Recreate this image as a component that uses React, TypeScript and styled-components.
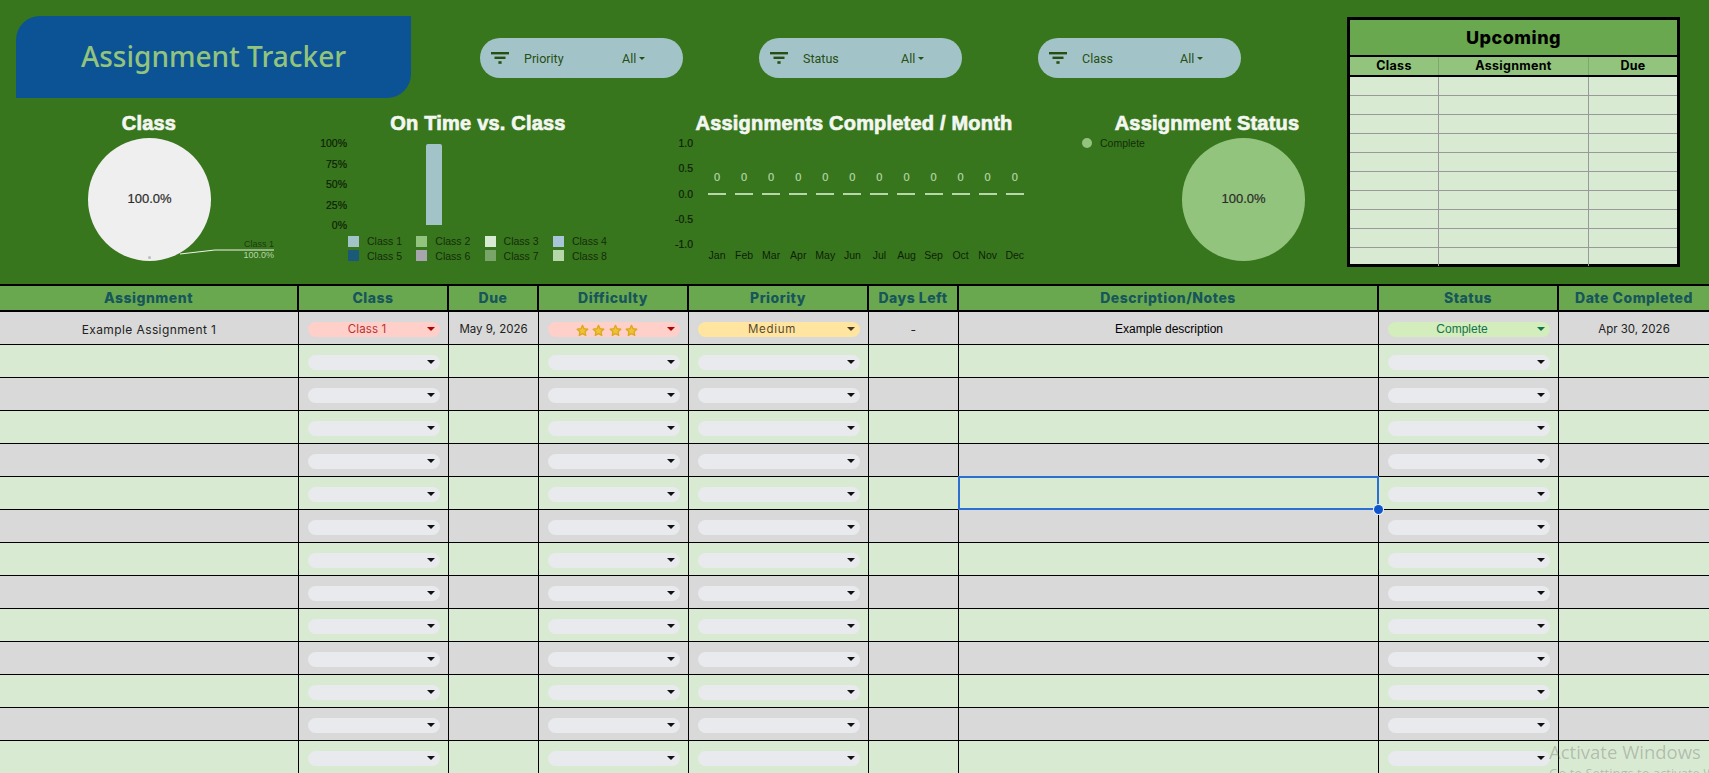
import React from 'react';
import styled, { createGlobalStyle } from 'styled-components';

const GREEN = '#38761d';
const MONT = `Inter, 'Liberation Sans', sans-serif`;
const ARIAL = `'Liberation Sans', Arial, sans-serif`;

const GlobalStyle = createGlobalStyle`
  html, body {
    margin: 0;
    height: 100%;
    overflow: hidden;
    background: ${GREEN};
  }
  * { box-sizing: border-box; }
`;

const MONTHS = ['Jan', 'Feb', 'Mar', 'Apr', 'May', 'Jun', 'Jul', 'Aug', 'Sep', 'Oct', 'Nov', 'Dec'];
const LEGEND = [
  ['Class 1', '#a2c4c9'],
  ['Class 2', '#93c47d'],
  ['Class 3', '#d9ead3'],
  ['Class 4', '#a8c5da'],
  ['Class 5', '#1a5a78'],
  ['Class 6', '#a6a6ac'],
  ['Class 7', '#7aa56a'],
  ['Class 8', '#b6d7a8'],
];
const COLUMNS = ['Assignment', 'Class', 'Due', 'Difficulty', 'Priority', 'Days Left', 'Description/Notes', 'Status', 'Date Completed'];
const ROW_COUNT = 14;

const FilterIcon = () => (
  <svg width="18" height="12" viewBox="0 0 18 12">
    <rect x="0" y="0" width="18" height="2.4" fill="#274e13" />
    <rect x="3.5" y="4.6" width="11" height="2.4" fill="#274e13" />
    <rect x="7.4" y="9.2" width="3.2" height="2.6" fill="#274e13" />
  </svg>
);

const StarIcon = () => (
  <svg width="13" height="13" viewBox="0 0 24 24">
    <path
      d="M12 2.5l2.9 6.3 6.9.8-5.1 4.7 1.4 6.8-6.1-3.4-6.1 3.4 1.4-6.8-5.1-4.7 6.9-.8z"
      fill="#f1c232"
      stroke="#dba81f"
      strokeWidth="2.4"
      strokeLinejoin="round"
    />
  </svg>
);

const Filter = ({ label }: { label: string }) => (
  <FilterPill>
    <FilterIcon />
    <FilterLabel>{label}</FilterLabel>
    <FilterValue>All</FilterValue>
    <Arrow $color="#274e13" $size={3.5} />
  </FilterPill>
);

const Chip = ({ bg, fg, arrow, children }: { bg?: string; fg?: string; arrow?: string; children?: React.ReactNode }) => (
  <ChipBody $bg={bg}>
    <ChipText $fg={fg}>{children}</ChipText>
    <ChipArrow $color={arrow || '#111'} $size={4} />
  </ChipBody>
);

const BlankRow = ({ odd }: { odd: boolean }) => (
  <Row $odd={odd}>
    <Cell />
    <Cell><Chip /></Cell>
    <Cell />
    <Cell><Chip /></Cell>
    <Cell><Chip /></Cell>
    <Cell />
    <Cell />
    <Cell><Chip /></Cell>
    <LastCell />
  </Row>
);

const App: React.FC = () => {
  return (
    <Page>
      <GlobalStyle />
      <Dashboard>
        <LeftColumn>
          <TopBar>
            <Banner>Assignment Tracker</Banner>
            <Filters>
              <Filter label="Priority" />
              <Filter label="Status" />
              <Filter label="Class" />
            </Filters>
          </TopBar>
          <Charts>
            <ClassCard>
              <ChartTitle>Class</ChartTitle>
              <ClassBody>
                <Pie $bg="#efefef">100.0%</Pie>
                <Leader width="100" height="14" viewBox="0 0 100 14">
                  <path d="M0 5 L35 1 L94 1" fill="none" stroke="#eef5ea" strokeWidth="1" />
                </Leader>
                <PieDot />
                <CalloutName>Class 1</CalloutName>
                <CalloutValue>100.0%</CalloutValue>
              </ClassBody>
            </ClassCard>

            <div>
              <ChartTitle>On Time vs. Class</ChartTitle>
              <BarPlot>
                <BarAxis>
                  {['100%', '75%', '50%', '25%', '0%'].map((t) => (
                    <AxisLabel key={t}>{t}</AxisLabel>
                  ))}
                </BarAxis>
                <Bar />
              </BarPlot>
              <Legend>
                {LEGEND.map(([name, color]) => (
                  <LegendItem key={name}>
                    <Swatch $color={color} />
                    {name}
                  </LegendItem>
                ))}
              </Legend>
            </div>

            <div>
              <ChartTitle>Assignments Completed / Month</ChartTitle>
              <MonthPlot>
                <MonthAxis>
                  {['1.0', '0.5', '0.0', '-0.5', '-1.0'].map((t) => (
                    <AxisLabel key={t}>{t}</AxisLabel>
                  ))}
                </MonthAxis>
                <MonthGrid>
                  {MONTHS.map((m) => (
                    <MonthColumn key={m}>
                      <MonthValue>0</MonthValue>
                      <MonthDash />
                      <MonthName>{m}</MonthName>
                    </MonthColumn>
                  ))}
                </MonthGrid>
              </MonthPlot>
            </div>

            <StatusCard>
              <ChartTitle>Assignment Status</ChartTitle>
              <StatusBody>
                <StatusLegend>
                  <StatusDot />
                  Complete
                </StatusLegend>
                <Pie $bg="#93c47d">100.0%</Pie>
              </StatusBody>
            </StatusCard>
          </Charts>
        </LeftColumn>

        <Upcoming>
          <UpcomingTitle>Upcoming</UpcomingTitle>
          <UpcomingHead>
            <UpcomingHeadCell>Class</UpcomingHeadCell>
            <UpcomingHeadCell>Assignment</UpcomingHeadCell>
            <UpcomingHeadCell>Due</UpcomingHeadCell>
          </UpcomingHead>
          {Array.from({ length: 10 }, (_, i) => (
            <UpcomingRow key={i}>
              <UpcomingCell />
              <UpcomingCell />
              <UpcomingCell />
            </UpcomingRow>
          ))}
        </Upcoming>
      </Dashboard>

      <Table>
        <HeadRow>
          {COLUMNS.map((c) => (
            <HeadCell key={c}>{c}</HeadCell>
          ))}
        </HeadRow>
        <Row $odd>
          <TextCell>Example Assignment 1</TextCell>
          <Cell><Chip bg="#ffcfc9" fg="#b83232" arrow="#b10202">Class 1</Chip></Cell>
          <DateCell>May 9, 2026</DateCell>
          <Cell>
            <Chip bg="#ffcfc9" arrow="#b10202">
              <Stars>
                <StarIcon />
                <StarIcon />
                <StarIcon />
                <StarIcon />
              </Stars>
            </Chip>
          </Cell>
          <Cell><Chip bg="#ffe5a0" fg="#5a4a2c" arrow="#473821"><Wide>Medium</Wide></Chip></Cell>
          <TextCell>-</TextCell>
          <NoteCell>Example description</NoteCell>
          <Cell><Chip bg="#d4edbc" fg="#11734b" arrow="#11734b"><StatusText>Complete</StatusText></Chip></Cell>
          <DateCell>Apr 30, 2026</DateCell>
        </Row>
        {Array.from({ length: ROW_COUNT - 1 }, (_, i) => (
          <BlankRow key={i} odd={i % 2 === 1} />
        ))}
        <Selection>
          <SelectionHandle />
        </Selection>
      </Table>

      <Watermark>
        <WatermarkTitle>Activate Windows</WatermarkTitle>
        <WatermarkNote>Go to Settings to activate Windows.</WatermarkNote>
      </Watermark>
    </Page>
  );
};

export default App;

const Page = styled.div`
  position: relative;
  width: 1709px;
  height: 773px;
  overflow: hidden;
  background: ${GREEN};
`;

const Dashboard = styled.section`
  display: flex;
  height: 284px;
`;

const LeftColumn = styled.div`
  width: 1347px;
  padding-top: 16px;
`;

const TopBar = styled.div`
  display: flex;
  padding-left: 16px;
`;

const Banner = styled.div`
  display: flex;
  align-items: center;
  justify-content: center;
  width: 395px;
  height: 82px;
  padding-bottom: 2px;
  background: #0b5394;
  border-radius: 24px 0 24px 0;
  color: #93c47d;
  font-family: 'Noto Sans', Lato, sans-serif;
  font-size: 28px;
  font-weight: 500;
`;

const Filters = styled.div`
  display: flex;
  gap: 76px;
  margin: 22px 0 0 69px;
`;

const FilterPill = styled.div`
  display: flex;
  align-items: center;
  width: 203px;
  height: 40px;
  padding-left: 11px;
  background: #a2c4c9;
  border-radius: 20px;
  color: #274e13;
  font-family: Roboto, sans-serif;
  font-size: 12.5px;
`;

const FilterLabel = styled.span`
  width: 98px;
  margin-left: 15px;
`;

const FilterValue = styled.span`
  margin-right: 3px;
`;

const Arrow = styled.i<{ $color: string; $size: number }>`
  display: block;
  flex: none;
  width: 0;
  height: 0;
  border-left: ${(p) => p.$size}px solid transparent;
  border-right: ${(p) => p.$size}px solid transparent;
  border-top: ${(p) => p.$size}px solid ${(p) => p.$color};
`;

const Charts = styled.div`
  display: grid;
  grid-template-columns: 298px 360px 392px 297px;
  margin-top: 14px;
`;

const ChartTitle = styled.h2`
  margin: 0;
  padding-bottom: 2px;
  color: #f3f6f1;
  font-family: ${ARIAL};
  font-size: 20px;
  font-weight: 700;
  line-height: 22px;
  letter-spacing: 0.2px;
  text-align: center;
  white-space: nowrap;
  -webkit-text-stroke: 0.7px #f3f6f1;
`;

const ClassCard = styled.div``;

const ClassBody = styled.div`
  position: relative;
  padding: 2px 0 0 88px;
`;

const Pie = styled.div<{ $bg: string }>`
  display: flex;
  align-items: center;
  justify-content: center;
  width: 123px;
  height: 123px;
  padding-bottom: 2px;
  border-radius: 50%;
  background: ${(p) => p.$bg};
  color: #2b2b2b;
  font-family: ${ARIAL};
  font-size: 13px;
  -webkit-text-stroke: 0.2px #2b2b2b;
`;

const PieDot = styled.i`
  position: absolute;
  left: 148px;
  top: 120px;
  width: 3px;
  height: 3px;
  border-radius: 50%;
  background: #bdbdbd;
`;

const Leader = styled.svg`
  position: absolute;
  left: 180px;
  top: 113px;
`;

const CalloutName = styled.span`
  position: absolute;
  right: 24px;
  top: 103px;
  color: #1c3a10;
  font-family: ${ARIAL};
  font-size: 9px;
  line-height: 11px;
`;

const CalloutValue = styled.span`
  position: absolute;
  right: 24px;
  top: 114px;
  color: #b6d7a8;
  font-family: ${ARIAL};
  font-size: 9px;
  line-height: 11px;
`;

const BarPlot = styled.div`
  display: flex;
  height: 98px;
`;

const AxisLabel = styled.span`
  color: #0e1f08;
  font-family: ${ARIAL};
  font-size: 10.5px;
  line-height: 12px;
  text-align: right;
  -webkit-text-stroke: 0.2px #0e1f08;
`;

const BarAxis = styled.div`
  display: flex;
  flex-direction: column;
  justify-content: space-between;
  width: 49px;
  height: 94px;
  margin-top: 1px;
`;

const Bar = styled.div`
  width: 16px;
  height: 81px;
  margin: 8px 0 0 79px;
  background: #a2c4c9;
  border-radius: 2px 2px 0 0;
`;

const Legend = styled.div`
  display: grid;
  grid-template-columns: repeat(4, 68.3px);
  grid-auto-rows: 14.5px;
  margin-left: 50px;
`;

const LegendItem = styled.div`
  display: flex;
  align-items: center;
  gap: 8px;
  color: #142c0a;
  font-family: ${ARIAL};
  font-size: 10.5px;
`;

const Swatch = styled.i<{ $color: string }>`
  width: 11px;
  height: 11px;
  background: ${(p) => p.$color};
`;

const MonthPlot = styled.div`
  display: flex;
`;

const MonthAxis = styled.div`
  display: flex;
  flex-direction: column;
  justify-content: space-between;
  width: 35px;
  height: 113px;
  margin-top: 1px;
`;

const MonthGrid = styled.div`
  display: grid;
  grid-template-columns: repeat(12, 27.07px);
  margin-left: 10.5px;
`;

const MonthColumn = styled.div`
  display: flex;
  flex-direction: column;
  align-items: center;
  padding-top: 35px;
  font-family: ${ARIAL};
  font-size: 10.5px;
  line-height: 12px;
`;

const MonthValue = styled.span`
  color: #b6d7a8;
  font-size: 11px;
  -webkit-text-stroke: 0.2px #b6d7a8;
`;

const MonthDash = styled.i`
  width: 18px;
  height: 2px;
  margin-top: 10px;
  background: #b6d7a8;
`;

const MonthName = styled.span`
  margin-top: 54px;
  color: #0e1f08;
`;

const StatusCard = styled.div`
  width: 280px;
  margin-left: 17px;
`;

const StatusBody = styled.div`
  display: flex;
  justify-content: space-between;
  padding: 2px 42px 0 15px;
`;

const StatusLegend = styled.div`
  display: flex;
  align-items: center;
  gap: 8px;
  height: 12px;
  margin-top: -1px;
  color: #142c0a;
  font-family: ${ARIAL};
  font-size: 10.5px;
`;

const StatusDot = styled.i`
  width: 10px;
  height: 10px;
  border-radius: 50%;
  background: #93c47d;
`;

const Upcoming = styled.aside`
  width: 333px;
  height: 250px;
  margin-top: 17px;
  border: 3px solid #000;
  background: #d9ead3;
  font-family: ${MONT};
`;

const UpcomingTitle = styled.div`
  height: 37px;
  padding-bottom: 2px;
  border-bottom: 2px solid #000;
  background: #6aa84f;
  color: #000;
  font-size: 18px;
  font-weight: 800;
  line-height: 36px;
  letter-spacing: 0.5px;
  text-align: center;
`;

const upcomingColumns = '89px 150px 1fr';

const UpcomingHead = styled.div`
  display: grid;
  grid-template-columns: ${upcomingColumns};
  height: 20px;
  border-bottom: 2px solid #000;
  background: #93c47d;
`;

const UpcomingHeadCell = styled.div`
  border-right: 1px solid #7fa96c;
  color: #000;
  font-size: 12.5px;
  font-weight: 700;
  line-height: 18px;
  letter-spacing: 0.3px;
  text-align: center;

  &:last-child {
    border-right: 0;
  }
`;

const UpcomingRow = styled.div`
  display: grid;
  grid-template-columns: ${upcomingColumns};
  height: 19px;
  border-bottom: 1px solid #999;

  &:last-child {
    height: 18px;
    border-bottom: 0;
  }
`;

const UpcomingCell = styled.div`
  border-right: 1px solid #999;

  &:last-child {
    border-right: 0;
  }
`;

const tableColumns = '299px 150px 90px 150px 180px 90px 420px 180px 150px';

const Table = styled.div`
  position: relative;
  font-family: ${MONT};
`;

const HeadRow = styled.div`
  display: grid;
  grid-template-columns: ${tableColumns};
  height: 28px;
  border-top: 2px solid #000;
  border-bottom: 2px solid #000;
  background: #6aa84f;
`;

const HeadCell = styled.div`
  border-right: 2px solid #000;
  color: #17565a;
  font-size: 14px;
  font-weight: 800;
  line-height: 24px;
  letter-spacing: 0.5px;
  text-align: center;
  white-space: nowrap;

  &:last-child {
    border-right: 0;
  }
`;

const Row = styled.div<{ $odd?: boolean }>`
  display: grid;
  grid-template-columns: ${tableColumns};
  height: 33px;
  border-bottom: 1px solid #000;
  background: ${(p) => (p.$odd ? '#d9d9d9' : '#d9ead3')};
`;

const Cell = styled.div`
  display: flex;
  align-items: center;
  padding: 2px 8px 0 9px;
  border-right: 1px solid #000;
`;

const LastCell = styled(Cell)`
  border-right: 0;
`;

const TextCell = styled(Cell)`
  justify-content: center;
  padding: 2px 0 0;
  color: #222;
  font-size: 12px;
  letter-spacing: 0.4px;
  white-space: nowrap;

  &:last-child {
    border-right: 0;
  }
`;

const DateCell = styled(TextCell)`
  font-size: 11.5px;
  letter-spacing: 0;
`;

const NoteCell = styled(Cell)`
  justify-content: center;
  color: #000;
  font-family: ${ARIAL};
  font-size: 12px;
`;

const ChipBody = styled.div<{ $bg?: string }>`
  position: relative;
  display: flex;
  align-items: center;
  justify-content: center;
  width: 100%;
  height: 15px;
  padding-right: 14px;
  border-radius: 8px;
  background: ${(p) => p.$bg || '#e8eaed'};
`;

const ChipText = styled.span<{ $fg?: string }>`
  color: ${(p) => p.$fg || '#111'};
  font-size: 11.5px;
  letter-spacing: 0.1px;
  white-space: nowrap;
`;

const ChipArrow = styled(Arrow)`
  position: absolute;
  right: 5px;
  top: 5.5px;
`;

const Stars = styled.span`
  display: flex;
  gap: 3.6px;
  padding-top: 2px;
`;

const StatusText = styled.span`
  font-family: ${ARIAL};
  font-size: 12px;
  letter-spacing: 0;
`;

const Wide = styled.span`
  letter-spacing: 0.7px;
`;

const Selection = styled.div`
  position: absolute;
  left: 958px;
  top: 192px;
  width: 421px;
  height: 34px;
  border: 2px solid #2b6fd4;
`;

const SelectionHandle = styled.i`
  position: absolute;
  right: -6px;
  bottom: -6px;
  width: 9px;
  height: 9px;
  border-radius: 50%;
  background: #1155cc;
  box-shadow: 0 0 0 1px #e8f0fe;
`;

const Watermark = styled.div`
  position: absolute;
  left: 1549px;
  top: 740px;
  width: 240px;
  color: rgba(90, 90, 90, 0.32);
  font-family: 'Open Sans', sans-serif;
`;

const WatermarkTitle = styled.div`
  font-size: 18.5px;
  line-height: 24px;
`;

const WatermarkNote = styled.div`
  font-size: 13px;
  line-height: 18px;
`;
